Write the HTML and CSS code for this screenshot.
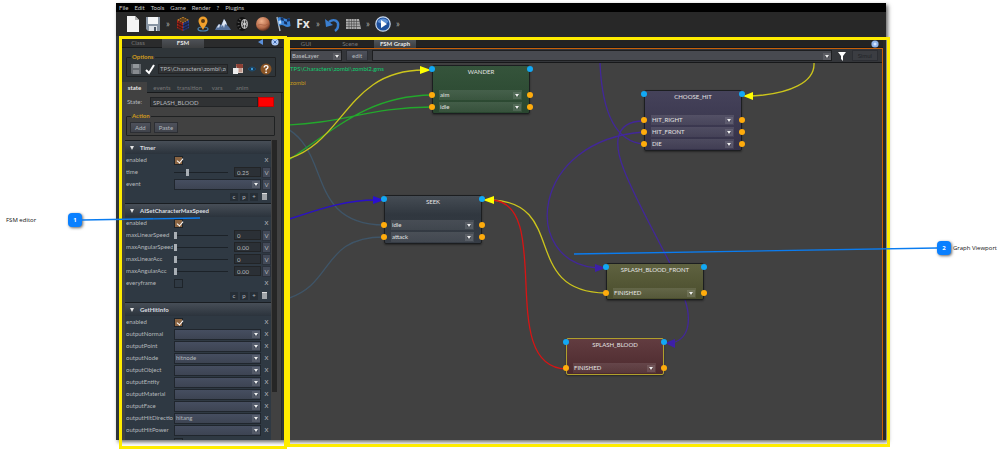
FILE: index.html
```html
<!DOCTYPE html>
<html lang="en">
<head>
<meta charset="utf-8">
<title>FSM editor</title>
<link rel="stylesheet" href="styles.css">
</head>
<body>
<main class="app">
  <nav class="menu">
    <button>File</button><button>Edit</button><button>Tools</button><button>Game</button><button>Render</button><button>?</button><button>Plugins</button>
  </nav>
  <div class="toolbar">
    <button class="tool" aria-label="New"><svg viewBox="0 0 16 16"><path d="M2 0h8l4 4v12H2z" fill="#f4f4f4"/><path d="M10 0v4h4z" fill="#b5b5b5"/></svg></button>
    <button class="tool" aria-label="Save"><svg viewBox="0 0 16 16"><path d="M1 1h14v14H3l-2-2z" fill="#8794a3"/><path d="M3 1h10v7H3z" fill="#f4f6f8"/><path d="M4 10h8v5H4z" fill="#dde2e8"/><path d="M9 11h2v4H9z" fill="#4a5665"/></svg></button>
    <span class="more">»</span>
    <button class="tool" aria-label="Cube"><svg viewBox="0 0 16 16"><path d="M2 4l6-3 6 3-6 3z" fill="#d8902a"/><path d="M2 4l6 3v8l-6-3z" fill="#b02418"/><path d="M14 4L8 7v8l6-3z" fill="#27409a"/><path d="M2 7l6 3 6-3M2 10l6 3 6-3M4 5v8M6 6v8M10 6v8M12 5v8M4 3l6 3M6 2l6 3M10 2L4 5M12 3L6 6" stroke="#1b1414" stroke-width=".7" fill="none"/></svg></button>
    <button class="tool" aria-label="Marker"><svg viewBox="0 0 16 16"><ellipse cx="8" cy="13" rx="5" ry="2" fill="none" stroke="#4a86b8" stroke-width="1.2"/><path d="M8 14C6 10 3.500 8 3.500 5a4.500 4.500 0 0 1 9 0c0 3-2.500 5-4.500 9z" fill="#f0a02c"/><circle cx="8" cy="5" r="2" fill="#5a3a14"/></svg></button>
    <button class="tool" aria-label="Terrain"><svg viewBox="0 0 16 16"><path d="M0 14l2-4 2-2 2 1 3-6 2 3 1 3 2 2 2 3z" fill="#55719c"/><path d="M9 3l2 3 1 3-2-1-1 4-1-3-2 2zM4 8l1 1-1 3-1-1-2 2z" fill="#dfe8f5"/></svg></button>
    <button class="tool" aria-label="Wheel"><svg viewBox="0 0 16 16"><ellipse cx="7" cy="8" rx="5.500" ry="7" fill="#111"/><ellipse cx="9.500" cy="8" rx="3.500" ry="5" fill="#b5b5b5"/><ellipse cx="9.500" cy="8" rx="2.300" ry="3.700" fill="#444"/><path d="M9.500 4v8M7 6.500l5 3M7 9.500l5-3" stroke="#ddd" stroke-width=".8"/><path d="M4 3l2 1M2.500 6l2 .5M2.500 10l2-.5M4 13l2-1" stroke="#777" stroke-width=".8"/></svg></button>
    <button class="tool" aria-label="Planet"><svg viewBox="0 0 16 16"><defs><radialGradient id="planet" cx=".4" cy=".3" r=".7"><stop offset="0" stop-color="#f0b08a"/><stop offset=".7" stop-color="#b56a48"/><stop offset="1" stop-color="#5e2e1e"/></radialGradient></defs><circle cx="8" cy="8" r="7" fill="url(#planet)"/><path d="M3 9q3-1 5 0t5-1" stroke="#a0583a" fill="none" stroke-width=".6"/></svg></button>
    <button class="tool" aria-label="Flag"><svg viewBox="0 0 16 16"><path d="M2 1l3 14" stroke="#b9c4cf" stroke-width="1.300"/><path d="M2.500 2q3-2 6 0t6 0l1 8q-3 2-6 0t-5.500 0z" fill="#3c86d8"/><path d="M5.500 1l3 1 .4 3-3-.8zM11.800 3l2.900-1 .5 3-3 .8zM8.900 5l3 .8.4 3-3-.8z" fill="#16305e"/><path d="M3.300 5l2.600-.8.5 3.200-2.500.6z" fill="#bcdcff"/></svg></button>
    <button class="tool fx">Fx</button>
    <span class="more">»</span>
    <button class="tool" aria-label="Undo"><svg viewBox="0 0 16 16"><path d="M4 6c5-4 10-1 9 4 0 2-1 3.500-3 5" fill="none" stroke="#3b7fd0" stroke-width="2.400"/><path d="M0 3l1 8 7-2z" fill="#3b7fd0"/></svg></button>
    <button class="tool" aria-label="Keyboard"><svg viewBox="0 0 16 16"><path d="M1 3h13l2 10H1z" fill="#aaa"/><path d="M1 5.500h14M1 8h14M1 10.500h14M4 3v10M6.500 3v10M9 3v10M11.500 3v10" stroke="#444" stroke-width=".6"/></svg></button>
    <span class="more">»</span>
    <button class="tool" aria-label="Play"><svg viewBox="0 0 16 16"><circle cx="8" cy="8" r="7.200" fill="#1d4f9c" stroke="#c9d8ec" stroke-width="1.200"/><path d="M2.500 6a6 6 0 0 1 11 0q-5 3-11 0z" fill="#5d90d4"/><path d="M6 4l6 4-6 4z" fill="#fff"/></svg></button>
    <span class="more">»</span>
  </div>

  <div class="work">
    <section class="editor">
      <div class="tabs">
        <button class="tab">Class</button><button class="tab on">FSM</button>
        <span class="grow"></span>
        <button class="mini" aria-label="Collapse"><svg viewBox="0 0 8 8"><path d="M6 1v6L1 4z" fill="#5b8fd8"/></svg></button>
        <button class="mini" aria-label="Close"><svg viewBox="0 0 8 8"><circle cx="4" cy="4" r="3.600" fill="#aecaf5"/><path d="M2.500 2.500l3 3M5.500 2.500l-3 3" stroke="#3c68b0"/></svg></button>
      </div>
      <fieldset class="group">
        <legend>Options</legend>
        <div class="options">
          <button class="ico" aria-label="Save"><svg viewBox="0 0 12 12"><path d="M1 1h10v10H2l-1-1z" fill="#666b70"/><path d="M3 1h6v4H3z" fill="#92979b"/><path d="M3 7h6v4H3z" fill="#888c90"/></svg></button>
          <button class="ico" aria-label="Apply"><svg viewBox="0 0 12 12"><path d="M2 7l3 3 5-8" fill="none" stroke="#fff" stroke-width="2"/></svg></button>
          <input class="field" aria-label="File" value="TPS\Characters\zombi\zc">
          <button class="ico" aria-label="Script"><svg viewBox="0 0 12 12"><path d="M4 2q0-1 1-1h5q1 0 1 1v8H5z" fill="#d9c4bb"/><path d="M4 2q0-1 1-1h5q1 0 1 1v3H5z" fill="#8c4034"/><path d="M1 5h5v6H1z" fill="#ececec"/><path d="M7 6h3M7 8h3" stroke="#a05a4c" stroke-width=".8"/></svg></button>
          <button class="ico" aria-label="View"><svg viewBox="0 0 12 12"><path d="M2 6q4-4 8 0-4 4-8 0z" fill="#17344c" stroke="#1d4d70"/><circle cx="6" cy="6" r="1.200" fill="#3d9ad8"/></svg></button>
          <button class="ico" aria-label="Help"><svg viewBox="0 0 12 12"><circle cx="6" cy="6" r="5.500" fill="#8a5526"/><path d="M4.200 4.600q0-2 1.900-2t1.800 1.700Q7.900 5.400 6.100 6.200v1.200" fill="none" stroke="#fff" stroke-width="1.400"/><circle cx="6.100" cy="9.300" r=".9" fill="#fff"/></svg></button>
        </div>
      </fieldset>
      <div class="tabs sub">
        <button class="tab on">state</button><button class="tab">events</button><button class="tab">transition</button><button class="tab">vars</button><button class="tab">anim</button>
      </div>
      <div class="page">
        <div class="state"><label for="st">State:</label><input id="st" class="field" value="SPLASH_BLOOD"><button class="swatch" aria-label="State colour"></button></div>
        <fieldset class="group">
          <legend>Action</legend>
          <div class="actions"><button class="btn">Add</button><button class="btn">Paste</button></div>
        </fieldset>
        <div class="list">
          <div class="cards">
            <section>
              <h2>Timer</h2>
              <div class="row"><label for="a1">enabled</label><input id="a1" type="checkbox" checked><button class="x">X</button></div>
              <div class="row"><label for="a2">time</label><div class="slide"><input id="a2" type="range" value="24"><input class="field" aria-label="time value" value="0.25"></div><button class="v">V</button></div>
              <div class="row"><label for="a3">event</label><span class="drop"><select id="a3"><option></option></select></span><button class="v">V</button></div>
              <div class="ops"><button>c</button><button>p</button><button>+</button><button class="bin" aria-label="Delete"></button></div>
            </section>
            <section>
              <h2>AISetCharacterMaxSpeed</h2>
              <div class="row"><label for="b1">enabled</label><input id="b1" type="checkbox" checked><button class="x">X</button></div>
              <div class="row"><label for="b2">maxLinearSpeed</label><div class="slide"><input id="b2" type="range" value="0"><input class="field" aria-label="maxLinearSpeed value" value="0"></div><button class="v">V</button></div>
              <div class="row"><label for="b3">maxAngularSpeed</label><div class="slide"><input id="b3" type="range" value="0"><input class="field" aria-label="maxAngularSpeed value" value="0.00"></div><button class="v">V</button></div>
              <div class="row"><label for="b4">maxLinearAcc</label><div class="slide"><input id="b4" type="range" value="0"><input class="field" aria-label="maxLinearAcc value" value="0"></div><button class="v">V</button></div>
              <div class="row"><label for="b5">maxAngularAcc</label><div class="slide"><input id="b5" type="range" value="0"><input class="field" aria-label="maxAngularAcc value" value="0.00"></div><button class="v">V</button></div>
              <div class="row"><label for="b6">everyframe</label><input id="b6" type="checkbox"><button class="x">X</button></div>
              <div class="ops"><button>c</button><button>p</button><button>+</button><button class="bin" aria-label="Delete"></button></div>
            </section>
            <section>
              <h2>GetHitInfo</h2>
              <div class="row"><label for="c1">enabled</label><input id="c1" type="checkbox" checked><button class="x">X</button></div>
              <div class="row"><label for="c2">outputNormal</label><span class="drop"><select id="c2"><option></option></select></span><button class="x">X</button></div>
              <div class="row"><label for="c3">outputPoint</label><span class="drop"><select id="c3"><option></option></select></span><button class="x">X</button></div>
              <div class="row"><label for="c4">outputNode</label><span class="drop"><select id="c4"><option>hitnode</option></select></span><button class="x">X</button></div>
              <div class="row"><label for="c5">outputObject</label><span class="drop"><select id="c5"><option></option></select></span><button class="x">X</button></div>
              <div class="row"><label for="c6">outputEntity</label><span class="drop"><select id="c6"><option></option></select></span><button class="x">X</button></div>
              <div class="row"><label for="c7">outputMaterial</label><span class="drop"><select id="c7"><option></option></select></span><button class="x">X</button></div>
              <div class="row"><label for="c8">outputFace</label><span class="drop"><select id="c8"><option></option></select></span><button class="x">X</button></div>
              <div class="row"><label for="c9">outputHitDirectio</label><span class="drop"><select id="c9"><option>hitang</option></select></span><button class="x">X</button></div>
              <div class="row"><label for="c10">outputHitPower</label><span class="drop"><select id="c10"><option></option></select></span><button class="x">X</button></div>
              <div class="row"><span></span><input type="checkbox" aria-label="Option"></div>
            </section>
          </div>
          <div class="scroll"></div>
        </div>
      </div>
    </section>

    <section class="graph">
      <div class="tabs wide">
        <button class="tab">GUI</button><button class="tab">Scene</button><button class="tab on">FSM Graph</button>
        <span class="grow"></span>
        <button class="mini" aria-label="Close"><svg viewBox="0 0 8 8"><circle cx="4" cy="4" r="3.600" fill="#8fb2e8"/><circle cx="4" cy="4" r="1.500" fill="#d6e6ff"/></svg></button>
      </div>
      <div class="view">
        <div class="bar">
          <span class="drop layer"><select aria-label="Layer"><option>BaseLayer</option></select></span>
          <button class="btn">edit</button>
          <span class="drop search"><select aria-label="Search"><option></option></select></span>
          <button class="ico" aria-label="Filter"><svg viewBox="0 0 12 12"><path d="M2 2h8L7 6v5L5 9V6z" fill="#fff"/></svg></button>
          <button class="btn off" disabled>Simul</button>
        </div>
        <div class="canvas">
          <p class="path">TPS\Characters\zombi\zombi2.gms</p>
          <p class="name">zombi</p>
          <svg class="edges" width="592" height="377" viewBox="290 63 592 377">
            <g fill="none" stroke-width="1.300">
              <path stroke="#3f5568" d="M284 127C332 150 305 224 384 225M384 237C320 237 335 285 286 299"/>
              <path stroke="#23a82c" d="M284 125C340 124 370 107 432 107M286 162C340 125 370 96 432 95"/>
              <path stroke="#ccc51c" d="M284 160C345 145 345 70 424 70M492 200C568 203 520 292 606 293M814 63C815 82 790 94 752 96"/>
              <path stroke="#2a10c8" d="M286 220C310 213 340 200 376 200"/>
              <path stroke="#d81414" d="M492 200C555 204 495 367 566 369"/>
              <path stroke="#42279a" d="M600 63C602 110 614 142 644 144M644 121C610 121 616 150 624 170C633 193 645 215 658 240C668 260 680 280 685 300C690 315 692 338 672 343M644 132C530 140 520 262 597 268"/>
            </g>
            <path fill="#ff0" d="M420 66v8l11-4zM494 196v8l-11-4zM753 92v8l-10-4z"/>
            <path fill="#2a10d0" d="M373 196v8l11-4z"/>
            <path fill="#3d20a8" d="M595 264v8l11-4zM675 339v9l-10-5z"/>
          </svg>
          <article class="node wander"><h3>WANDER</h3><div class="slot"><span class="drop"><select aria-label="aim"><option>aim</option></select></span></div><div class="slot"><span class="drop"><select aria-label="idle"><option>idle</option></select></span></div></article>
          <article class="node choose"><h3>CHOOSE_HIT</h3><div class="slot"><span class="drop"><select aria-label="HIT_RIGHT"><option>HIT_RIGHT</option></select></span></div><div class="slot"><span class="drop"><select aria-label="HIT_FRONT"><option>HIT_FRONT</option></select></span></div><div class="slot"><span class="drop"><select aria-label="DIE"><option>DIE</option></select></span></div></article>
          <article class="node seek"><h3>SEEK</h3><div class="slot"><span class="drop"><select aria-label="idle"><option>idle</option></select></span></div><div class="slot"><span class="drop"><select aria-label="attack"><option>attack</option></select></span></div></article>
          <article class="node front"><h3>SPLASH_BLOOD_FRONT</h3><div class="slot"><span class="drop"><select aria-label="FINISHED"><option>FINISHED</option></select></span></div></article>
          <article class="node blood"><h3>SPLASH_BLOOD</h3><div class="slot"><span class="drop"><select aria-label="FINISHED"><option>FINISHED</option></select></span></div></article>
        </div>
      </div>
    </section>
  </div>
</main>

<aside class="note one"><span>FSM editor</span><b>1</b><svg width="118" height="4" viewBox="0 0 118 4"><path d="M0 3L118 1" stroke="#0a7cf0" stroke-width="1.300"/></svg></aside>
<aside class="note two"><svg width="363" height="8" viewBox="0 0 363 8"><path d="M0 7L363 1" stroke="#0a7cf0" stroke-width="1.300"/></svg><b>2</b><span>Graph Viewport</span></aside>
</body>
</html>
```

FILE: styles.css
```css
* { box-sizing: border-box; }
body {
  margin: 0;
  padding: 3px 121px 0 116px;
  height: 100vh;
  overflow: hidden;
  position: relative;
  background: #fff;
  font: 6px/8px Lato, "Open Sans", sans-serif;
  color: #b4b8bc;
}
button, input, select { font: inherit; color: inherit; margin: 0; padding: 0; border: 0; background: none; border-radius: 0; outline: 0; min-width: 0; }
h2, h3, p, fieldset { margin: 0; padding: 0; font: inherit; min-width: 0; }
svg { display: block; }
.grow { flex: 1; }

.app {
  height: calc(100vh - 19px);
  display: flex;
  flex-direction: column;
  background: #282828;
  box-shadow: 2px 2px 4px #0009;
}
.menu { display: flex; gap: 6px; height: 9px; padding-left: 3px; background: #000; color: #c8c8c8; }
.toolbar { display: flex; align-items: center; gap: 4px; height: 24px; padding-left: 9px; }
.tool { width: 16px; height: 16px; flex: none; }
.fx { color: #e4e4e4; font: bold 12px/16px "Open Sans", sans-serif; }
.more { width: 6px; text-align: center; font-size: 9px; color: #aaa; }

.work { flex: 1; min-height: 0; display: flex; }
.editor, .graph { position: relative; display: flex; flex-direction: column; min-height: 0; }
.editor { width: 171px; flex: none; padding: 2px 4px 0 6px; background: #2f3539; }
.graph { flex: 1; min-width: 0; padding: 4px 3px 0 3px; }
.editor::after, .graph::after { content: ""; position: absolute; border: 3px solid #ffec00; pointer-events: none; }
.editor::after { inset: 0 0 -9px 3px; }
.graph::after { inset: 1px -4px -7px 0; }

.tabs { display: flex; align-items: stretch; height: 10px; padding-right: 4px; color: #777; border-bottom: 1px solid #181a1c; background: #2a2b2c; }
.tab { width: 40px; text-align: center; }
.tab:first-child { width: 32px; }
.tab.on { width: 42px; margin-bottom: -1px; color: #e6e6e6; background: linear-gradient(#50545a, #3c3e40); font-weight: bold; }
.editor .tabs:first-child .tab:first-child { margin-right: 8px; }
.mini { width: 8px; height: 8px; margin-left: 6px; }
.sub { height: 11px; margin-top: 5px; padding: 0; gap: 5px; background: none; }
.sub .tab, .sub .tab:first-child { width: auto; min-width: 20px; line-height: 11px; }
.sub .tab.on { min-width: 25px; background: #414141; }
.wide { height: 8px; background: #232323; }
.wide .tab:first-child { width: 32px; margin-right: 8px; }
.wide .tab.on { margin-left: 4px; }

.group { margin: 5px 7px 0 4px; border: 1px solid #1f2122; border-radius: 1px; padding: 0 3px; }
.group legend { padding: 0 1px; margin-left: 1px; color: #d09a1c; font-weight: bold; line-height: 8px; }
.options { display: flex; align-items: center; gap: 2px; height: 15px; }
.ico { width: 12px; height: 12px; flex: none; }
.field { background: #303234; border: 1px solid #222426; height: 10px; padding: 0 2px; }
.options .field { flex: 1; padding: 0 1px; margin-right: 2px; }
.page { flex: 1; min-height: 0; display: flex; flex-direction: column; background: #414141; padding: 3px 0 0 3px; margin-right: 1px; border-right: 1px solid #26292b; }
.state { display: flex; align-items: center; gap: 8px; padding: 0 7px 0 2px; height: 12px; }
.state .field { flex: 1; }
.swatch { width: 16px; height: 10px; background: #f00; margin-left: -8px; border: 1px solid #c00; }
.page .group { margin: 4px 6px 0 1px; }
.actions { display: flex; align-items: center; gap: 3px; height: 15px; }
.btn { height: 11px; padding: 0 4px; background: linear-gradient(#4e515b, #40434b); border: 1px solid #2c2e33; color: #b4b8be; }
.bar .btn { padding: 0 5px; }
.bar .off { color: #222428; background: #3b3d42; }

.list { flex: 1; min-height: 0; display: flex; gap: 1px; margin: 4px 4px 0 0; overflow: hidden; }
.cards { flex: 1; min-width: 0; background: #2f3943; overflow: hidden; }
.scroll { width: 5px; margin-bottom: 48px; background: #262626; }
h2 { height: 14px; padding-left: 5px; display: flex; align-items: center; gap: 6px; line-height: 12px; font-weight: bold; color: #dadde0; background: linear-gradient(#474e57, #2b333c); border-top: 1px solid #191d21; }
h2::before { content: ""; border: 2px solid transparent; border-top: 4px solid #e4e4e4; border-bottom: 0; }
.row { display: grid; grid-template-columns: 47px minmax(0, 1fr) 9px; gap: 1px; align-items: center; height: 12px; padding-left: 1px; }
.row label { white-space: nowrap; overflow: hidden; }
.x { text-align: center; }
.v { height: 11px; background: #434a58; border: 1px solid #2b313b; line-height: 9px; }
.row input[type="checkbox"] { appearance: none; width: 9px; height: 9px; border: 1px solid #1e242a; position: relative; }
.row input:checked { background: #8a6442; }
.row input:checked::after { content: ""; position: absolute; left: 3px; top: 0; width: 3px; height: 5px; border: solid #fff; border-width: 0 1px 1px 0; transform: rotate(40deg); }
.slide { display: flex; align-items: center; gap: 6px; }
.slide .field { width: 27px; flex: none; background: #2b3036; }
.slide input[type="range"] { appearance: none; width: 0; flex: 1; height: 9px; background: linear-gradient(#1c2228, #1c2228) center / 100% 1px no-repeat; }
.slide input[type="range"]::-webkit-slider-thumb { appearance: none; width: 3px; height: 7px; background: #a9afb5; }
.drop { position: relative; display: block; height: 11px; background: linear-gradient(#464e60, #3d4453); border: 1px solid #20262d; }
.drop::after { content: ""; position: absolute; right: 2px; top: 50%; margin-top: -1px; border: 2px solid transparent; border-top: 3px solid #eee; border-bottom: 0; outline: 2px solid #ffffff1c; pointer-events: none; }
.drop select { appearance: none; display: block; width: 100%; height: 100%; padding: 0 1px; }
.ops { display: flex; justify-content: flex-end; align-items: center; gap: 2px; height: 13px; padding-right: 2px; }
.ops button { width: 8px; height: 8px; line-height: 7px; background: #262e36; }
.ops .bin { width: 5px; height: 7px; margin: 0 2px; border-top: 1px solid #ddd; background: #a0a4a8; }

.view { flex: 1; min-height: 0; display: flex; flex-direction: column; border: 1px solid #c8600a; border-width: 1px 1px 0 0; }
.bar { display: flex; align-items: center; gap: 4px; height: 14px; padding: 0 4px 0 0; background: #34363a; border-bottom: 1px solid #17181a; }
.bar .drop { background: #484a50; border-color: #1d1e20; }
.layer { width: 52px; }
.layer select { color: #c2c4c8; }
.search { flex: 1; }
.canvas { position: relative; flex: 1; min-height: 0; overflow: hidden; background: #414141; }
.path, .name { padding-top: 2px; color: #0fcf70; }
.name { padding-top: 6px; color: #c69a1c; }
.edges { position: absolute; left: 0; top: 0; }

.node { position: absolute; width: 98px; color: #e4e4e4; border: 1px solid #1c1e20; border-radius: 2px; box-shadow: 0 1px 2px #0006; }
.node h3 { position: relative; height: 23px; padding-top: 2px; text-align: center; }
.slot { position: relative; height: 12px; padding: 1px 7px 1px 6px; }
.slot .drop { height: 10px; background: linear-gradient(#ffffff1c, #ffffff10); border: 0; }
.slot .drop::after { right: 3px; }
.node h3::before, .node h3::after, .slot::before, .slot::after { content: ""; position: absolute; left: -4px; top: 3px; width: 6px; height: 6px; border-radius: 50%; background: #ffac0c; }
.node h3::before, .node h3::after { top: 0; background: #12a8f4; }
.node h3::after, .slot::after { left: auto; right: -4px; }
.wander { left: 142px; top: 2px; background: linear-gradient(#35543b, #29462f); }
.choose { left: 354px; top: 27px; background: linear-gradient(#45425a, #343148); }
.seek { left: 94px; top: 132px; background: linear-gradient(#454c54, #30373f 40%, #363c45); }
.front { left: 316px; top: 200px; background: linear-gradient(#5f6240, #4a4d2c); }
.blood { left: 276px; top: 275px; border-color: #b0a02c; background: linear-gradient(#623c40, #4c2a2e); }

.note { position: absolute; display: flex; align-items: center; height: 14px; color: #111; font-family: "Open Sans", sans-serif; white-space: nowrap; }
.note b { width: 14px; height: 14px; border-radius: 4px; background: #0a80ff; color: #fff; text-align: center; line-height: 14px; box-shadow: 1px 1px 3px #0009; }
.one { left: 6px; top: 213px; }
.one span { width: 62px; }
.one span, .two span { line-height: 14px; }
.one svg { margin-bottom: 2px; }
.two { right: 10px; top: 241px; }
.two svg { margin-top: 6px; }
.two b { margin-right: 2px; }
```
